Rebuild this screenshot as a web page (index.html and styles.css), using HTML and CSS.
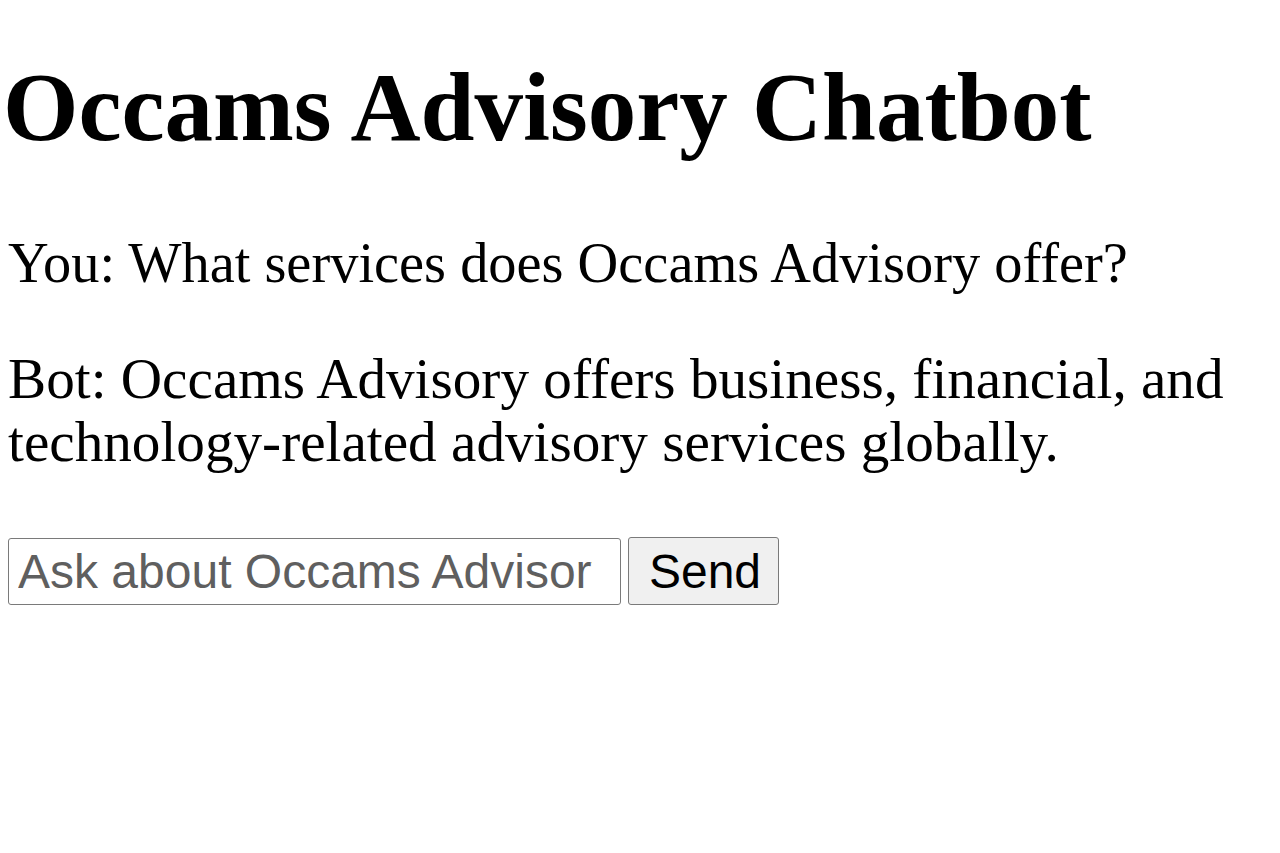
FILE: index.html
```html
<!DOCTYPE html>
<html lang="en">
<head>
<meta charset="utf-8">
<title>Occams Advisory Chatbot</title>
<link rel="stylesheet" href="styles.css">
</head>
<body>
<h1 class="title">Occams Advisory Chatbot</h1>
<div class="chat">
  <p class="msg msg-user">You: What services does Occams Advisory offer?</p>
  <p class="msg msg-bot">Bot: Occams Advisory offers business, financial, and technology-related advisory services globally.</p>
</div>
<form class="ask">
  <input class="ask-input" type="text" placeholder="Ask about Occams Advisory...">
  <button class="ask-btn" type="button">Send</button>
</form>
</body>
</html>
```
FILE: styles.css
```css
html, body {
  margin: 0;
  padding: 0;
  background: #fff;
}
body {
  padding: 0 8px;
  font-family: "Liberation Serif", "Times New Roman", serif;
  color: #000;
}
.title {
  font-size: 97px;
  font-weight: bold;
  line-height: 110px;
  margin: 53px 0 0 -5px;
}
.chat {
  display: flex;
  flex-direction: column;
  gap: 52px;
  margin-top: 69px;
}
.msg {
  font-size: 56.4px;
  line-height: 63px;
  margin: 0;
}
.msg-bot {
  font-size: 57.2px;
}
.ask {
  display: flex;
  gap: 7px;
  align-items: flex-start;
  margin-top: 64px;
}
.ask-input {
  box-sizing: border-box;
  width: 613px;
  height: 67px;
  margin: 1px 0 0 0;
  padding: 0 28px 0 9px;
  border: 1.5px solid #7a7a7a;
  border-radius: 3px;
  font-family: "Liberation Sans", Arial, sans-serif;
  font-size: 48px;
  color: #000;
  background: #fff;
  outline: none;
}
.ask-input::placeholder {
  color: #5f5f5f;
  opacity: 1;
}
.ask-btn {
  box-sizing: border-box;
  width: 151px;
  height: 68px;
  margin: 0;
  padding: 0 0 0 3px;
  border: 1.5px solid #7a7a7a;
  border-radius: 3px;
  background: #f0f0f0;
  font-family: "Liberation Sans", Arial, sans-serif;
  font-size: 48px;
  color: #000;
}
```
